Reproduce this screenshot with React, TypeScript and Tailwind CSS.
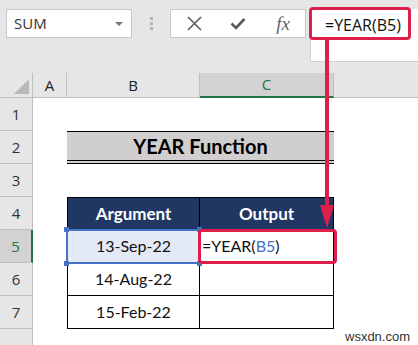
import { ReactNode } from 'react'

const CAL = "font-['Lato','Carlito','Liberation_Sans',sans-serif]"
const UI = "font-['Open_Sans','Noto_Sans',sans-serif]"

function RowHead({ n, active }: { n?: number; active?: boolean }) {
  return (
    <div
      className={`flex items-center justify-center border-b border-[#bfbfbf] text-[15px] ${UI} ${
        active
          ? 'bg-[#d2d2d2] text-[#217346] border-r-2 border-r-[#217346]'
          : 'bg-[#e6e6e6] text-[#333] border-r border-r-[#bfbfbf]'
      }`}
    >
      {n}
    </div>
  )
}

function Cell({ children, className = '' }: { children?: ReactNode; className?: string }) {
  return (
    <div className={`flex items-center justify-center text-[16px] text-[#111] ${CAL} ${className}`}>
      {children}
    </div>
  )
}

export default function App() {
  const dates = ['14-Aug-22', '15-Feb-22']

  return (
    <div className="relative w-[418px] h-[345px] overflow-hidden bg-white">
      {/* toolbar */}
      <div className="h-[73px] bg-[#e6e6e6] flex items-start pt-[9px]">
        <div className="ml-[6px] w-[126px] h-[29px] bg-white border border-[#c8c8c8] flex items-center justify-between pl-[7px] pr-[8px]">
          <span className={`text-[15px] text-[#333] ${UI}`}>SUM</span>
          <span className="w-0 h-0 border-l-[4px] border-r-[4px] border-t-[4px] border-l-transparent border-r-transparent border-t-[#777]" />
        </div>
        <div className="w-[38px] h-[29px] flex flex-col items-center justify-center gap-[2px]">
          <span className="w-[3px] h-[3px] bg-[#b5b5b5]" />
          <span className="w-[3px] h-[3px] bg-[#b5b5b5]" />
          <span className="w-[3px] h-[3px] bg-[#b5b5b5]" />
        </div>
        <div className="w-[136px] h-[29px] bg-white border border-[#c8c8c8] flex items-center">
          <div className="w-[44px] flex justify-center pl-[2px]">
            <svg width="15" height="15" viewBox="0 0 15 15">
              <path d="M1 1L14 14M14 1L1 14" stroke="#5a5a5a" strokeWidth="1.6" />
            </svg>
          </div>
          <div className="w-[46px] flex justify-center">
            <svg width="16" height="13" viewBox="0 0 16 13">
              <path d="M1.5 6.5L6 11L14.5 2" stroke="#5a5a5a" strokeWidth="2.6" fill="none" />
            </svg>
          </div>
          <div className="w-[44px] flex justify-center">
            <span className="font-['Liberation_Serif',serif] italic text-[19px] text-[#666] leading-none">
              fx
            </span>
          </div>
        </div>
        <div className="ml-[4px] flex-1 h-[53px] bg-white border-l border-b border-[#d0d0d0] flex items-start pt-[4px] pl-[14px]">
          <span className={`text-[16px] text-[#111] ${UI}`}>=YEAR(B5)</span>
        </div>
      </div>

      {/* sheet */}
      <div className="grid grid-cols-[33px_34px_133px_134px_84px] grid-rows-[25px_repeat(8,33px)]">
        {/* column headers */}
        <div className="bg-[#e6e6e6] border-r border-b border-[#bfbfbf] flex items-end justify-end pr-[3px] pb-[3px]">
          <div className="w-[15px] h-[15px] shrink-0 bg-[#b9b9b9] [clip-path:polygon(100%_0,100%_100%,0_100%)]" />
        </div>
        <div className={`bg-[#e6e6e6] border-r border-b border-[#bfbfbf] flex items-center justify-center text-[15px] text-[#222] ${UI}`}>A</div>
        <div className={`bg-[#e6e6e6] border-r border-b border-[#bfbfbf] flex items-center justify-center text-[15px] text-[#222] ${UI}`}>B</div>
        <div className={`bg-[#d2d2d2] border-r border-r-[#bfbfbf] border-b-2 border-b-[#217346] flex items-center justify-center text-[15px] text-[#217346] ${UI}`}>C</div>
        <div className="bg-[#e6e6e6] border-b border-[#bfbfbf]" />

        {/* row 1 */}
        <RowHead n={1} />
        <Cell />
        <Cell />
        <Cell />
        <Cell />

        {/* row 2 */}
        <RowHead n={2} />
        <Cell />
        <div className={`col-span-2 bg-[#d0cece] border-t-[1.5px] border-t-black border-b-[4px] border-b-black [border-bottom-style:double] flex items-center justify-center font-bold text-[20px] text-black ${CAL}`}>
          YEAR Function
        </div>
        <Cell />

        {/* row 3 */}
        <RowHead n={3} />
        <Cell />
        <Cell />
        <Cell />
        <Cell />

        {/* row 4 */}
        <RowHead n={4} />
        <Cell />
        <Cell className="bg-[#203764] text-white font-bold text-[17px] border border-black">Argument</Cell>
        <Cell className="bg-[#203764] text-white font-bold text-[17px] border-y border-r border-black">Output</Cell>
        <Cell />

        {/* row 5 */}
        <RowHead n={5} active />
        <Cell />
        <Cell className="bg-[#e4eaf5] border-x border-b border-black">13-Sep-22</Cell>
        <Cell className="justify-start pl-[2px] border-r border-b border-black">
          =YEAR(<span className="text-[#3f6fc0]">B5</span>)
        </Cell>
        <Cell />

        {/* rows 6-7 */}
        {dates.map((d, i) => (
          <div key={d} className="contents">
            <RowHead n={6 + i} />
            <Cell />
            <Cell className="border-x border-b border-black">{d}</Cell>
            <Cell className="border-r border-b border-black" />
            <Cell />
          </div>
        ))}

        {/* row 8, label falls below the frame */}
        <RowHead />
        <Cell />
        <Cell />
        <Cell />
        <Cell />
      </div>

      {/* selection around B5 */}
      <div className="absolute left-[66px] top-[229px] w-[134px] h-[35px] border-2 border-[#4472c4]" />
      <span className="absolute left-[64px] top-[227px] w-[5px] h-[5px] bg-[#4472c4]" />
      <span className="absolute left-[64px] top-[261px] w-[5px] h-[5px] bg-[#4472c4]" />
      <span className="absolute left-[197px] top-[227px] w-[5px] h-[5px] bg-[#4472c4]" />
      <span className="absolute left-[197px] top-[261px] w-[5px] h-[5px] bg-[#4472c4]" />

      {/* red highlight boxes */}
      <div className="absolute left-[309px] top-[7px] w-[102px] h-[33px] border-[3px] border-[#dc1f4b] rounded-[4px]" />
      <div className="absolute left-[198px] top-[229px] w-[139px] h-[35px] border-[3px] border-[#dc1f4b] rounded-[4px]" />

      {/* arrow */}
      <div className="absolute left-[325px] top-[39px] w-[4px] h-[168px] bg-[#dc1f4b]" />
      <span className="absolute left-[320px] top-[205px] w-0 h-0 border-l-[7px] border-r-[7px] border-t-[23px] border-l-transparent border-r-transparent border-t-[#dc1f4b]" />

      {/* watermark */}
      <span className="absolute left-[345px] top-[327px] text-[13px] text-[#333] font-['Liberation_Sans',sans-serif]">
        wsxdn.com
      </span>
    </div>
  )
}
